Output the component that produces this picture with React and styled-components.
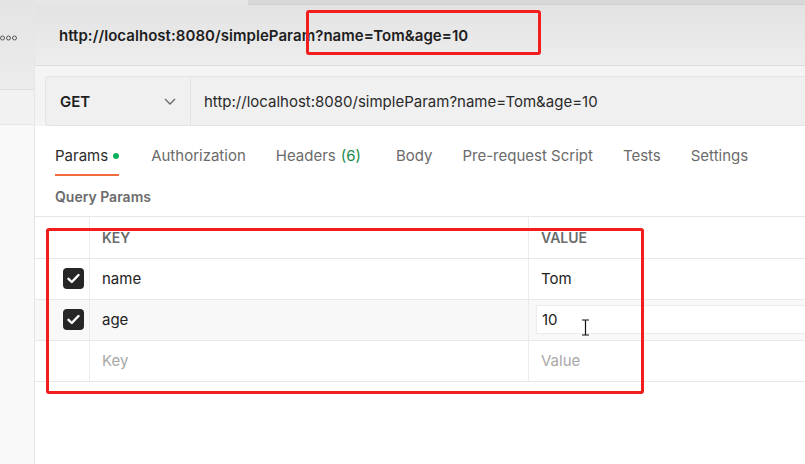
import React from 'react';
import styled, { createGlobalStyle } from 'styled-components';

const Global = createGlobalStyle`
  html, body { margin: 0; padding: 0; background: #ffffff; }
  body { font-family: Inter, "Noto Sans", "Liberation Sans", sans-serif; }
  * { box-sizing: border-box; }
`;

const Screen = styled.div`
  position: relative;
  width: 805px;
  height: 464px;
  display: flex;
  overflow: hidden;
  background: #ffffff;
`;

const Sidebar = styled.div`
  width: 35px;
  flex-shrink: 0;
  display: flex;
  flex-direction: column;
  background: #f9f9f9;
  border-right: 1px solid #e6e6e6;
`;

const SideTop = styled.div`
  height: 90px;
  background: linear-gradient(180deg, #e4e4e4 0%, #ececec 100%);
  padding: 25px 0 0 0;
  border-bottom: 1px solid #dedede;
`;

const SideBand = styled.div`
  height: 35px;
  background: #f2f2f2;
  border-bottom: 1px solid #e6e6e6;
`;

const Main = styled.div`
  flex: 1;
  min-width: 0;
  display: flex;
  flex-direction: column;
`;

const TopStrip = styled.div`
  height: 5px;
  display: flex;
`;

const StripActive = styled.div`
  width: 213px;
  background: #e6e6e6;
`;

const StripRest = styled.div`
  flex: 1;
  background: #d8d8d8;
  border-bottom: 1px solid #cfcfcf;
`;

const Header = styled.div`
  height: 61px;
  display: flex;
  align-items: center;
  padding: 0 0 0 24px;
  background: linear-gradient(180deg, #e3e3e3 0%, #ededed 100%);
  border-bottom: 1px solid #dcdcdc;
`;

const Title = styled.h1`
  margin: 0;
  font-size: 15px;
  font-weight: 600;
  color: #1e1e1e;
  letter-spacing: 0.05px;
`;

const RequestArea = styled.div`
  padding: 10px 0 0 10px;
  background: #f4f4f4;
  height: 60px;
`;

const RequestBar = styled.div`
  height: 50px;
  display: flex;
  align-items: stretch;
  background: #f0f0f0;
  border: 1px solid #e4e4e4;
  border-right: none;
  border-radius: 4px 0 0 4px;
`;

const Method = styled.div`
  width: 145px;
  display: flex;
  align-items: center;
  justify-content: space-between;
  padding: 0 14px 0 14px;
  border-right: 1px solid #e2e2e2;
  font-size: 15px;
  font-weight: 600;
  color: #1e1e1e;
`;

const Url = styled.div`
  display: flex;
  align-items: center;
  padding-left: 13px;
  font-size: 15px;
  color: #2a2a2a;
`;

const Tabs = styled.div`
  display: flex;
  gap: 30px;
  padding: 0 0 0 20px;
  margin-top: 8px;
  height: 42px;
`;

const Tab = styled.div`
  display: flex;
  align-items: center;
  gap: 5px;
  font-size: 15px;
  color: ${p => (p.active ? '#2b2b2b' : '#6b6b6b')};
  border-bottom: 2px solid ${p => (p.active ? '#f26b3a' : 'transparent')};
  padding-top: 2px;
  margin-right: ${p => p.extra || 0}px;
`;

const Dot = styled.span`
  width: 6px;
  height: 6px;
  border-radius: 50%;
  background: #0cb25b;
  margin-top: 1px;
`;

const Count = styled.span`
  color: #1c8a4a;
`;

const SectionLabel = styled.div`
  height: 40px;
  display: flex;
  align-items: center;
  padding-left: 20px;
  font-size: 14px;
  font-weight: 600;
  color: #6b6b6b;
`;

const Table = styled.div`
  border-top: 1px solid #e6e6e6;
`;

const Row = styled.div`
  display: grid;
  grid-template-columns: 55px 439px 1fr;
  height: ${p => (p.head ? '42px' : '41px')};
  border-bottom: 1px solid #e8e8e8;
  background: ${p => (p.shaded ? '#f8f8f8' : '#ffffff')};
`;

const Cell = styled.div`
  display: flex;
  align-items: center;
  padding-left: ${p => (p.check ? '28px' : '12px')};
  padding-bottom: ${p => (p.head ? '0' : '2px')};
  border-right: ${p => (p.last ? 'none' : '1px solid #ececec')};
  font-size: ${p => (p.head ? '14px' : '15px')};
  font-weight: ${p => (p.head ? 600 : 400)};
  color: ${p => (p.head ? '#6b6b6b' : p.placeholder ? '#a8a8a8' : '#222222')};
`;

const EditBox = styled.div`
  flex: 1;
  height: 29px;
  margin-left: -5px;
  padding-left: 5px;
  display: flex;
  align-items: center;
  background: #ffffff;
  border: 1px solid #ececec;
  border-right: none;
  position: relative;
`;

const Check = styled.span`
  width: 21px;
  height: 21px;
  border-radius: 4px;
  background: #262626;
  display: flex;
  align-items: center;
  justify-content: center;
`;

const Mark = styled.div`
  position: absolute;
  border: 3px solid #f21d1d;
  border-radius: 3px;
  pointer-events: none;
  left: ${p => p.x}px;
  top: ${p => p.y}px;
  width: ${p => p.w}px;
  height: ${p => p.h}px;
`;

const Cursor = styled.svg`
  position: absolute;
  left: 44px;
  top: 13px;
`;

const CheckBox = () => (
  <Check>
    <svg width="13" height="11" viewBox="0 0 13 11">
      <polyline points="1.5,5.8 4.8,9 11.5,2" fill="none" stroke="#ffffff" strokeWidth="2.4" strokeLinecap="round" strokeLinejoin="round" />
    </svg>
  </Check>
);

const rows = [
  { key: 'name', value: 'Tom' },
  { key: 'age', value: '10', editing: true },
];

export default function App() {
  return (
    <Screen>
      <Global />
      <Sidebar>
        <SideTop>
          <svg width="20" height="6" viewBox="0 0 20 6">
            {[2.5, 8.5, 14.5].map(cx => (
              <circle key={cx} cx={cx} cy="3" r="2" fill="none" stroke="#555" strokeWidth="1" />
            ))}
          </svg>
        </SideTop>
        <SideBand />
      </Sidebar>
      <Main>
        <TopStrip>
          <StripActive />
          <StripRest />
        </TopStrip>
        <Header>
          <Title>http://localhost:8080/simpleParam?name=Tom&amp;age=10</Title>
        </Header>
        <RequestArea>
          <RequestBar>
            <Method>
              GET
              <svg width="12" height="7" viewBox="0 0 12 7">
                <polyline points="1,1 6,6 11,1" fill="none" stroke="#666" strokeWidth="1.3" />
              </svg>
            </Method>
            <Url>http://localhost:8080/simpleParam?name=Tom&amp;age=10</Url>
          </RequestBar>
        </RequestArea>
        <Tabs>
          <Tab active extra={2}>Params <Dot /></Tab>
          <Tab>Authorization</Tab>
          <Tab extra={5}>Headers <Count>(6)</Count></Tab>
          <Tab>Body</Tab>
          <Tab>Pre-request Script</Tab>
          <Tab>Tests</Tab>
          <Tab>Settings</Tab>
        </Tabs>
        <SectionLabel>Query Params</SectionLabel>
        <Table>
          <Row head>
            <Cell head check />
            <Cell head>KEY</Cell>
            <Cell head last>VALUE</Cell>
          </Row>
          {rows.map(r => (
            <Row key={r.key} shaded={r.editing}>
              <Cell check><CheckBox /></Cell>
              <Cell>{r.key}</Cell>
              <Cell last>
                {r.editing ? (
                  <EditBox>
                    {r.value}
                    <Cursor width="9" height="17" viewBox="0 0 9 17">
                      <path d="M1 1 H8 M4.5 1 V16 M1 16 H8" stroke="#111" strokeWidth="1.2" fill="none" />
                    </Cursor>
                  </EditBox>
                ) : r.value}
              </Cell>
            </Row>
          ))}
          <Row>
            <Cell check />
            <Cell placeholder>Key</Cell>
            <Cell placeholder last>Value</Cell>
          </Row>
        </Table>
      </Main>
      <Mark x={306} y={10} w={235} h={45} />
      <Mark x={46} y={228} w={598} h={166} />
    </Screen>
  );
}
